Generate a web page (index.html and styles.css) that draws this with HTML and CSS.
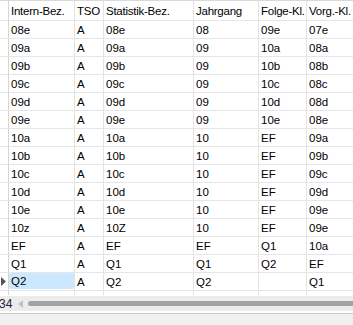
FILE: index.html
```html
<!DOCTYPE html>
<html>
<head>
<meta charset="utf-8">
<link rel="stylesheet" href="styles.css">
</head>
<body>
<div class="view">
  <div class="grid">
    <div class="c ind"></div><div class="c h">Intern-Bez.</div><div class="c h">TSO</div><div class="c h">Statistik-Bez.</div><div class="c h">Jahrgang</div><div class="c h">Folge-Kl.</div><div class="c h last">Vorg.-Kl.</div>

    <div class="c ind"></div><div class="c">08e</div><div class="c">A</div><div class="c">08e</div><div class="c">08</div><div class="c">09e</div><div class="c last">07e</div>
    <div class="c ind"></div><div class="c">09a</div><div class="c">A</div><div class="c">09a</div><div class="c">09</div><div class="c">10a</div><div class="c last">08a</div>
    <div class="c ind"></div><div class="c">09b</div><div class="c">A</div><div class="c">09b</div><div class="c">09</div><div class="c">10b</div><div class="c last">08b</div>
    <div class="c ind"></div><div class="c">09c</div><div class="c">A</div><div class="c">09c</div><div class="c">09</div><div class="c">10c</div><div class="c last">08c</div>
    <div class="c ind"></div><div class="c">09d</div><div class="c">A</div><div class="c">09d</div><div class="c">09</div><div class="c">10d</div><div class="c last">08d</div>
    <div class="c ind"></div><div class="c">09e</div><div class="c">A</div><div class="c">09e</div><div class="c">09</div><div class="c">10e</div><div class="c last">08e</div>
    <div class="c ind"></div><div class="c">10a</div><div class="c">A</div><div class="c">10a</div><div class="c">10</div><div class="c">EF</div><div class="c last">09a</div>
    <div class="c ind"></div><div class="c">10b</div><div class="c">A</div><div class="c">10b</div><div class="c">10</div><div class="c">EF</div><div class="c last">09b</div>
    <div class="c ind"></div><div class="c">10c</div><div class="c">A</div><div class="c">10c</div><div class="c">10</div><div class="c">EF</div><div class="c last">09c</div>
    <div class="c ind"></div><div class="c">10d</div><div class="c">A</div><div class="c">10d</div><div class="c">10</div><div class="c">EF</div><div class="c last">09d</div>
    <div class="c ind"></div><div class="c">10e</div><div class="c">A</div><div class="c">10e</div><div class="c">10</div><div class="c">EF</div><div class="c last">09e</div>
    <div class="c ind"></div><div class="c">10z</div><div class="c">A</div><div class="c">10Z</div><div class="c">10</div><div class="c">EF</div><div class="c last">09e</div>
    <div class="c ind"></div><div class="c">EF</div><div class="c">A</div><div class="c">EF</div><div class="c">EF</div><div class="c">Q1</div><div class="c last">10a</div>
    <div class="c ind"></div><div class="c">Q1</div><div class="c">A</div><div class="c">Q1</div><div class="c">Q1</div><div class="c">Q2</div><div class="c last">EF</div>
    <div class="c ind cur"><svg width="6" height="9" viewBox="0 0 6 9"><path d="M0 0 L5 4.5 L0 9 Z" fill="#555"/></svg></div><div class="c"><span class="sel">Q2</span></div><div class="c">A</div><div class="c">Q2</div><div class="c">Q2</div><div class="c"></div><div class="c last">Q1</div>

    <div class="f ind"></div><div class="f"></div><div class="f"></div><div class="f"></div><div class="f"></div><div class="f"></div><div class="f last"></div>
  </div>
  <div class="hscroll">
    <span class="num">34</span>
    <span class="arrow"></span>
    <span class="thumb"></span>
  </div>
  <div class="status"></div>
</div>
</body>
</html>
```
FILE: styles.css
```css
html, body {
  margin: 0;
  padding: 0;
  background: #ffffff;
}
body {
  width: 353px;
  height: 325px;
  overflow: hidden;
  font-family: "Liberation Sans", Arial, sans-serif;
  font-size: 11.5px;
  color: #000;
}
.view {
  display: flex;
  flex-direction: column;
  height: 325px;
}
.grid {
  display: grid;
  grid-template-columns: 9px 66px 29px 90px 65px 48px 60px;
  grid-template-rows: 20px repeat(15, 18px) 4px;
  border-top: 1px solid #d9d9d9;
  width: 353px;
  overflow: hidden;
}
.c {
  box-sizing: border-box;
  border-right: 1px solid #e3e3e3;
  border-bottom: 1px solid #e6e6e6;
  padding-left: 2px;
  display: flex;
  align-items: center;
  white-space: nowrap;
  overflow: hidden;
  line-height: 14px;
}
.h {
  padding-left: 2px;
  letter-spacing: -0.25px;
}
.ind {
  padding: 0;
  border-right: 1px solid #d6d6d6;
}
.cur {
  padding-left: 1px;
}
.c .sel {
  display: block;
  box-sizing: border-box;
  background: #cce8ff;
  border-radius: 2px;
  margin-left: -2px;
  padding-left: 2px;
  width: 65px;
  height: 16px;
  line-height: 16px;
  margin-top: -1px;
}
.f {
  box-sizing: border-box;
  border-right: 1px solid #e3e3e3;
}
.f.ind {
  border-right: 1px solid #d6d6d6;
}
.hscroll {
  margin-top: 1px;
  height: 15px;
  background: #ececec;
  display: flex;
  align-items: center;
}
.num {
  font-size: 12px;
  color: #1e1e3a;
  margin-left: -1px;
  width: 17px;
}
.arrow {
  width: 0;
  height: 0;
  border-top: 4px solid transparent;
  border-bottom: 4px solid transparent;
  border-right: 5px solid #c2c2c2;
  margin-left: 2px;
}
.thumb {
  flex: 1;
  height: 5px;
  background: #a3a3a3;
  border-radius: 3px 0 0 3px;
  margin-left: 5px;
}
.status {
  margin-top: 2px;
  border-top: 1px solid #c8c8c8;
  background: #f0f0f0;
  flex: 1;
}
```
